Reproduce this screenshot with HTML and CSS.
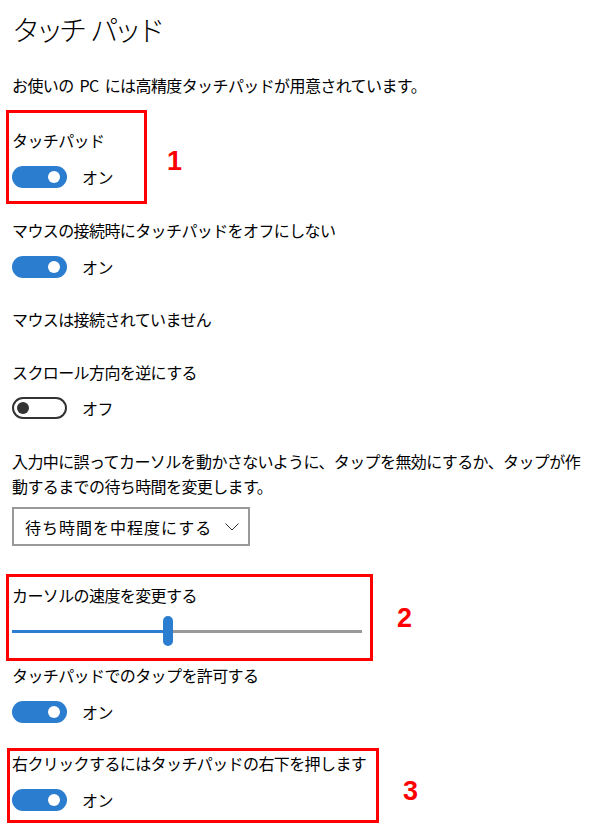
FILE: index.html
```html
<!DOCTYPE html>
<html lang="ja">
<head>
<meta charset="utf-8">
<title>タッチパッド</title>
<link rel="stylesheet" href="styles.css">
</head>
<body>
<main class="page">
  <h1 class="title">タッチ パッド</h1>
  <p class="desc">お使いの PC には高精度タッチパッドが用意されています。</p>

  <section class="setting s-touchpad">
    <div class="label">タッチパッド</div>
    <div class="toggle-row"><span class="toggle on"><span class="knob"></span></span><span class="state">オン</span></div>
    <div class="annot a1"></div>
    <div class="num n1">1</div>
  </section>

  <section class="setting s-mouse">
    <div class="label">マウスの接続時にタッチパッドをオフにしない</div>
    <div class="toggle-row"><span class="toggle on"><span class="knob"></span></span><span class="state">オン</span></div>
  </section>

  <p class="note">マウスは接続されていません</p>

  <section class="setting s-scroll">
    <div class="label">スクロール方向を逆にする</div>
    <div class="toggle-row"><span class="toggle off"><span class="knob"></span></span><span class="state">オフ</span></div>
  </section>

  <p class="para">入力中に誤ってカーソルを動かさないように、タップを無効にするか、タップが作<br>動するまでの待ち時間を変更します。</p>

  <div class="select">
    <span class="select-text">待ち時間を中程度にする</span>
    <svg class="chev" width="14" height="8" viewBox="0 0 14 8"><polyline points="0.5,0.5 7,7 13.5,0.5" fill="none" stroke="#333" stroke-width="1"/></svg>
  </div>

  <section class="setting s-cursor">
    <div class="label">カーソルの速度を変更する</div>
    <div class="slider">
      <div class="track-fill"></div>
      <div class="thumb"></div>
      <div class="track-rest"></div>
    </div>
    <div class="annot a2"></div>
    <div class="num n2">2</div>
  </section>

  <section class="setting s-tap">
    <div class="label">タッチパッドでのタップを許可する</div>
    <div class="toggle-row"><span class="toggle on"><span class="knob"></span></span><span class="state">オン</span></div>
  </section>

  <section class="setting s-rclick">
    <div class="label">右クリックするにはタッチパッドの右下を押します</div>
    <div class="toggle-row"><span class="toggle on"><span class="knob"></span></span><span class="state">オン</span></div>
    <div class="annot a3"></div>
    <div class="num n3">3</div>
  </section>
</main>
</body>
</html>
```

FILE: styles.css
```css
html, body {
  margin: 0;
  padding: 0;
  background: #fff;
}
body {
  font-family: "Noto Sans CJK JP", "Noto Sans", sans-serif;
  font-size: 16px;
  letter-spacing: -0.6px;
  color: #000;
}
.page {
  padding: 12px 0 15px 12px;
  width: 581px;
  min-height: 828px;
  box-sizing: border-box;
}
.title {
  margin: 0;
  font-size: 28px;
  font-weight: 300;
  letter-spacing: -4.5px;
  word-spacing: 6px;
  line-height: 34px;
  height: 34px;
}
.desc, .note, .para {
  margin: 0;
  line-height: 24px;
}
.desc { margin-top: 27px; word-spacing: 3px; }
.label { line-height: 24px; }
.setting { position: relative; }
.toggle-row {
  display: flex;
  align-items: center;
  gap: 15px;
  height: 24px;
  margin-top: 13px;
}
.state { line-height: 24px; }
.toggle {
  position: relative;
  display: block;
  width: 55px;
  height: 22px;
  border-radius: 11px;
  box-sizing: border-box;
}
.toggle.on { background: #2b7dd0; }
.toggle.off {
  background: #fff;
  border: 2px solid #333;
  height: 22px;
}
.knob {
  position: absolute;
  top: 50%;
  width: 12px;
  height: 12px;
  margin-top: -6px;
  border-radius: 50%;
}
.toggle.on .knob { right: 7px; background: #fff; }
.toggle.off .knob { left: 3px; background: #333; }

.s-touchpad { margin-top: 31px; }
.s-mouse { margin-top: 29px; }
.note { margin-top: 28px; }
.s-scroll { margin-top: 29px; }
.s-scroll .toggle-row { margin-top: 12px; }
.para { margin-top: 29px; line-height: 25px; }

.select {
  margin-top: 8px;
  width: 238px;
  height: 39px;
  box-sizing: border-box;
  border: 2px solid #999;
  display: flex;
  align-items: center;
  padding-left: 11px;
}
.select-text {
  font-size: 16px;
  letter-spacing: 1px;
  line-height: 24px;
}
.chev { margin-left: auto; margin-right: 9px; }

.s-cursor { margin-top: 37px; }
.slider {
  margin-top: 9px;
  width: 350px;
  height: 30px;
  display: flex;
  align-items: center;
}
.track-fill { width: 151px; height: 3px; background: #2b7dd0; }
.thumb { width: 10px; height: 30px; border-radius: 5px; background: #2b7dd0; }
.track-rest { flex: 1; height: 3px; background: #999; }

.s-tap { margin-top: 17px; }
.s-rclick { margin-top: 27px; }

.annot {
  position: absolute;
  box-sizing: border-box;
  border: 3px solid #f00;
}
.a1 { top: -18px; bottom: -15px; left: -6px; width: 141px; }
.a2 { top: -9px; bottom: -15px; left: -6px; width: 367px; }
.a3 { top: -3px; bottom: -11px; left: -5px; width: 372px; }
.num {
  position: absolute;
  font-family: "Liberation Sans", Arial, sans-serif;
  font-weight: bold;
  font-size: 27px;
  line-height: 1;
  letter-spacing: 0;
  color: #f00;
}
.n1 { top: 20px; left: 155px; }
.n2 { top: 22px; left: 385px; }
.n3 { top: 27px; left: 391px; }
```
